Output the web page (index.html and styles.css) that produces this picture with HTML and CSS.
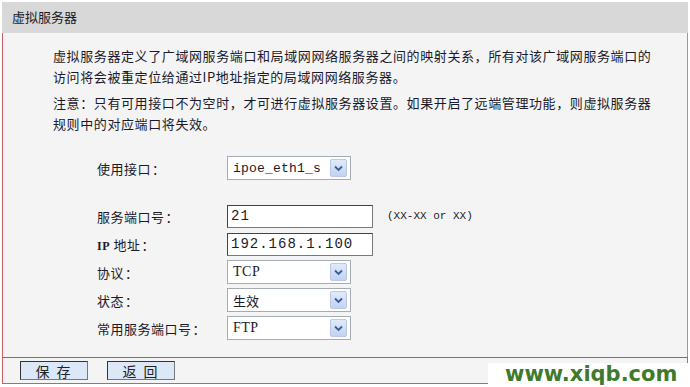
FILE: index.html
```html
<!DOCTYPE html>
<html lang="zh-CN">
<head>
    <meta charset="UTF-8">
    <title>虚拟服务器</title>
    <link rel="stylesheet" href="styles.css">
</head>
<body>
    <div id="panel">
        <div class="title">虚拟服务器</div>
        <div class="content">
            <p>虚拟服务器定义了广域网服务端口和局域网网络服务器之间的映射关系，所有对该广域网服务端口的访问将会被重定位给通过IP地址指定的局域网网络服务器。</p>
            <p>注意：只有可用接口不为空时，才可进行虚拟服务器设置。如果开启了远端管理功能，则虚拟服务器规则中的对应端口将失效。</p>
            <div class="form">
                <div class="row first">
                    <label>使用接口<b>：</b></label>
                    <div class="select"><span class="mono">ipoe_eth1_s</span><i class="arrow"><svg width="9" height="7" viewBox="0 0 9 7"><path d="M1 1.5 L4.5 5 L8 1.5" fill="none" stroke="#3b5aa0" stroke-width="1.8"/></svg></i></div>
                </div>
                <div class="row">
                    <label>服务端口号<b>：</b></label>
                    <div class="input mono">21</div>
                    <span class="hint">(XX-XX or XX)</span>
                </div>
                <div class="row">
                    <label><span class="serif small">IP</span> 地址<b>：</b></label>
                    <div class="input mono">192.168.1.100</div>
                </div>
                <div class="row">
                    <label>协议<b>：</b></label>
                    <div class="select"><span class="serif">TCP</span><i class="arrow"><svg width="9" height="7" viewBox="0 0 9 7"><path d="M1 1.5 L4.5 5 L8 1.5" fill="none" stroke="#3b5aa0" stroke-width="1.8"/></svg></i></div>
                </div>
                <div class="row">
                    <label>状态<b>：</b></label>
                    <div class="select"><span>生效</span><i class="arrow"><svg width="9" height="7" viewBox="0 0 9 7"><path d="M1 1.5 L4.5 5 L8 1.5" fill="none" stroke="#3b5aa0" stroke-width="1.8"/></svg></i></div>
                </div>
                <div class="row">
                    <label>常用服务端口号<b>：</b></label>
                    <div class="select"><span class="serif">FTP</span><i class="arrow"><svg width="9" height="7" viewBox="0 0 9 7"><path d="M1 1.5 L4.5 5 L8 1.5" fill="none" stroke="#3b5aa0" stroke-width="1.8"/></svg></i></div>
                </div>
            </div>
        </div>
        <div class="actions">
            <button>保 存</button>
            <button>返 回</button>
        </div>
    </div>
    <div id="mark">www.xiqb.com</div>
</body>
</html>
```

FILE: styles.css
```css
* {
    margin: 0;
    padding: 0;
    box-sizing: border-box;
}
body {
    background: #fff;
    font-family: "Noto Sans CJK SC", sans-serif;
    font-size: 13px;
    color: #1a1a2a;
}
#panel {
    width: 686px;
    margin: 2px 0 0 2px;
}
.title {
    height: 31px;
    line-height: 30px;
    padding-left: 10px;
    background: #d8d8d8;
    font-size: 13px;
}
.content {
    background: #f4f4f4;
    border-left: 1px solid #c96060;
    border-right: 1px solid #d88080;
    padding: 12px 0 16px 50px;
    height: 324px;
}
.content p {
    width: 610px;
    line-height: 21px;
    letter-spacing: 0.6px;
    margin-bottom: 5px;
}
.form {
    margin-top: 20px;
    padding-left: 44px;
}
.row {
    display: flex;
    align-items: center;
    height: 28px;
}
.row.first {
    margin-bottom: 20px;
}
.row label {
    width: 130px;
    letter-spacing: 0.5px;
}
.row label b {
    font-weight: normal;
    font-family: "Noto Sans CJK TC", sans-serif;
    margin-left: 1px;
}
.mono {
    font-family: "Liberation Mono", monospace;
    font-size: 14px;
}
.serif {
    font-family: "Liberation Serif", serif;
    font-size: 14px;
    letter-spacing: 0.5px;
}
.serif.small {
    font-size: 12px;
    font-weight: bold;
}
.input {
    width: 146px;
    height: 23px;
    line-height: 20px;
    padding-left: 3px;
    background: #fff;
    border: 1px solid #7a7a7a;
    border-top-color: #444;
    border-left-color: #444;
    letter-spacing: 1px;
}
.select {
    display: flex;
    align-items: center;
    justify-content: space-between;
    width: 124px;
    height: 24px;
    padding: 0 3px 0 5px;
    background: #fff;
    border: 1px solid #a5acb5;
}
.select .mono {
    font-size: 13px;
    letter-spacing: 0.2px;
}
.arrow {
    display: flex;
    align-items: center;
    justify-content: center;
    width: 17px;
    height: 18px;
    border: 1px solid #b7c9e6;
    border-radius: 2px;
    background: linear-gradient(#e1eafa, #c2d3f0);
}
.hint {
    margin-left: 14px;
    font-family: "Liberation Mono", monospace;
    font-size: 11px;
}
.actions {
    height: 27px;
    background: #f4f4f4;
    border: 1px solid #c96060;
    border-top-color: #c85050;
    padding: 3px 0 0 17px;
    display: flex;
    gap: 19px;
}
.actions button {
    width: 68px;
    height: 19px;
    background: #dce8f8;
    border: 1px solid #333;
    border-right-color: #777;
    border-bottom-color: #777;
    font-family: "Noto Sans CJK SC", sans-serif;
    font-size: 14px;
    line-height: 16px;
    letter-spacing: 2px;
    color: #222;
}
#mark {
    position: absolute;
    left: 488px;
    top: 363px;
    width: 200px;
    height: 24px;
    background: #fff;
    color: #3f7a2c;
    font-family: "DejaVu Sans", sans-serif;
    font-weight: bold;
    font-size: 21px;
    line-height: 22px;
    padding-left: 17px;
}
```
